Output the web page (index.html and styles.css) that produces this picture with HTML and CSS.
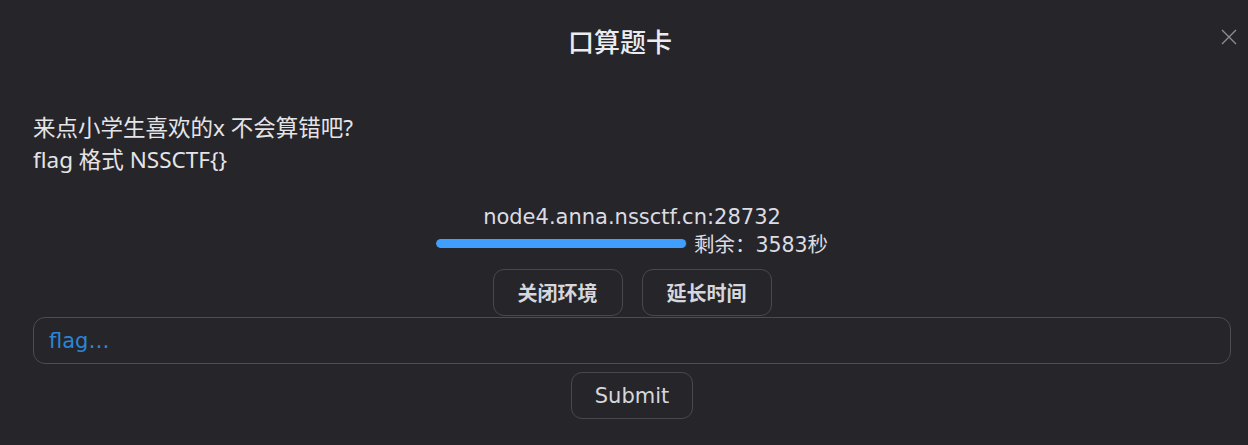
FILE: index.html
```html
<!DOCTYPE html>
<html>
  <head>
    <meta charset="utf-8">
    <title>口算题卡</title>
    <link rel="stylesheet" href="styles.css">
  </head>
  <body>
    <div class="dialog">
      <div class="dialog-header">
        <h2 class="dialog-title">口算题卡</h2>
        <button class="close" aria-label="close">
          <svg width="16" height="16" viewBox="0 0 16 16">
            <path d="M1 1 L15 15 M15 1 L1 15" stroke="currentColor" stroke-width="1.4" fill="none"/>
          </svg>
        </button>
      </div>

      <div class="dialog-body">
        <div class="desc">
          <p>来点小学生喜欢的x 不会算错吧?</p>
          <p>flag 格式 NSSCTF{}</p>
        </div>

        <div class="env">
          <div class="address">node4.anna.nssctf.cn:28732</div>
          <div class="timer">
            <div class="bar"><div class="bar-fill" style="width: 99.5%"></div></div>
            <span class="remain">剩余：3583秒</span>
          </div>
          <div class="env-actions">
            <button class="btn">关闭环境</button>
            <button class="btn">延长时间</button>
          </div>
        </div>

        <form class="flag-form">
          <input class="flag-input" type="text" placeholder="flag…">
          <button class="btn submit" type="button">Submit</button>
        </form>
      </div>
    </div>
  </body>
</html>
```

FILE: styles.css
```css
body {
  margin: 0;
  background-color: #26262a;
  color: #e2e2e6;
  font-family: "DejaVu Sans", "Noto Sans CJK SC", sans-serif;
}

.dialog {
  height: 445px;
  overflow: hidden;
}

.dialog-header {
  height: 80px;
  display: flex;
  align-items: center;
  justify-content: center;
  padding-right: 8px;
}

.dialog-title {
  margin: 0;
  font-family: "Noto Sans CJK SC", sans-serif;
  font-size: 26px;
  font-weight: 500;
  color: #ececf0;
}

.close {
  position: absolute;
  top: 29px;
  right: 11px;
  padding: 0;
  border: none;
  background: none;
  color: #8c8c92;
  cursor: pointer;
}

.dialog-body {
  padding: 32px 17px 0 33px;
}

.desc p {
  margin: 0;
  font-family: "Noto Sans", "Noto Sans CJK SC", sans-serif;
  font-size: 22.5px;
  line-height: 32px;
  color: #e4e4e8;
}

.env {
  display: flex;
  flex-direction: column;
  align-items: center;
  margin-top: 27px;
}

.address {
  font-size: 21px;
  line-height: 28px;
  color: #dcdce2;
}

.timer {
  display: flex;
  align-items: center;
  gap: 7px;
  height: 24px;
  font-size: 20.5px;
  color: #dcdce2;
}

.bar {
  width: 251px;
  height: 9px;
  border-radius: 5px;
  background-color: #3a3a40;
  overflow: hidden;
}

.bar-fill {
  height: 100%;
  border-radius: 5px;
  background-color: #409eff;
}

.env-actions {
  display: flex;
  gap: 19px;
  margin-top: 14px;
}

.btn {
  height: 47px;
  padding: 0 22px;
  border: 1px solid #48484e;
  border-radius: 11px;
  background-color: #26262a;
  color: #d6d6dc;
  font-family: "DejaVu Sans", "Noto Sans CJK SC", sans-serif;
  font-size: 20px;
  font-weight: bold;
  cursor: pointer;
}

.env-actions .btn {
  width: 130px;
}

.flag-form {
  display: flex;
  flex-direction: column;
  align-items: center;
  gap: 8px;
  margin-top: 1px;
}

.flag-input {
  box-sizing: border-box;
  width: 100%;
  height: 47px;
  padding: 0 15px;
  border: 1px solid #4c4c52;
  border-radius: 12px;
  background-color: #26262a;
  color: #e2e2e6;
  font-family: "DejaVu Sans", sans-serif;
  font-size: 21px;
  outline: none;
}

.flag-input::placeholder {
  color: #2b85d8;
}

.submit {
  width: 122px;
  font-size: 21px;
  font-weight: normal;
}
```
